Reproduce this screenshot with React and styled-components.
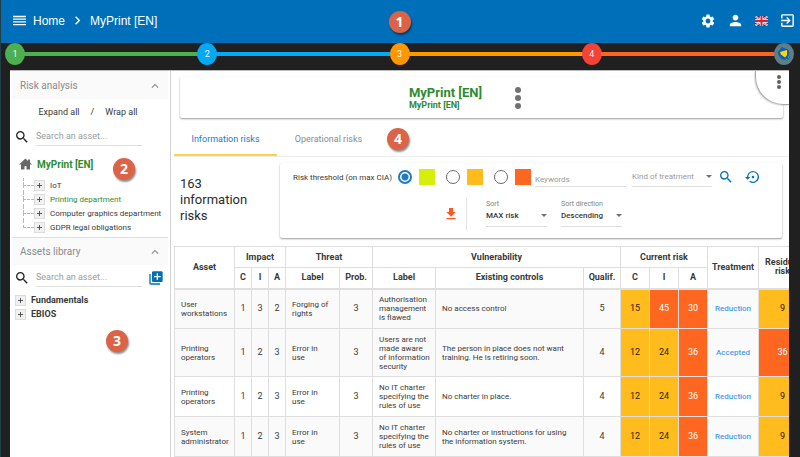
import React from "react";
import styled, { createGlobalStyle } from "styled-components";
import {
  MdChevronRight,
  MdSettings,
  MdPerson,
  MdExitToApp,
  MdSearch,
  MdLibraryAdd,
  MdSettingsBackupRestore,
  MdFileDownload,
  MdExpandLess,
} from "react-icons/md";

const c = {
  blue: "#006fb9",
  link: "#1e7ac4",
  green: "#2e8b30",
  text: "#3a3a3a",
  muted: "#8a8a8a",
  line: "#dedede",
  lime: "#d5ef0a",
  amber: "#ffbc1c",
  orange: "#ff661f",
};

const Global = createGlobalStyle`
  * { box-sizing: border-box; }
  body { margin: 0; background: #202020; font-family: Roboto, "Liberation Sans", sans-serif; font-size: 9px; color: ${c.text}; }
  button, input, select { font: inherit; color: inherit; }
  button { background: none; border: 0; padding: 0; margin: 0; cursor: pointer; }
  svg { display: block; flex: none; }
`;

const Page = styled.div`
  height: 100vh;
  display: flex;
  flex-direction: column;
  overflow: hidden;
  border-left: 1px solid #1f3f4a;
`;

const TopBar = styled.header`
  position: relative;
  height: 43px;
  flex: none;
  display: flex;
  align-items: center;
  justify-content: space-between;
  padding: 0 4px 2px 12px;
  background: ${c.blue};
  color: #fff;
`;

const Crumbs = styled.nav`
  display: flex;
  align-items: center;
  font-family: "Liberation Sans", Arial, sans-serif;
  font-size: 12px;
  gap: 4px;
  a { color: inherit; text-decoration: none; }
  button { margin-right: 3px; }
`;

const Actions = styled.div`
  display: flex;
  align-items: center;
  gap: 11px;
`;

const Badge = styled.span`
  position: absolute;
  left: ${(p) => p.$left};
  top: ${(p) => p.$top};
  width: 22px;
  height: 22px;
  border-radius: 50%;
  background: #da6445;
  color: #fff;
  font: bold 14px/22px "Open Sans", sans-serif;
  text-align: center;
  box-shadow: 1px 2px 2px rgba(0, 0, 0, 0.45);
  z-index: 2;
`;

const Stepper = styled.nav`
  height: 27px;
  flex: none;
  display: flex;
  align-items: flex-start;
  padding: 0 6px 0 4px;
`;

const Step = styled.button`
  width: 20px;
  height: 22px;
  flex: none;
  display: flex;
  align-items: center;
  justify-content: center;
  border-radius: 50%;
  background: ${(p) => p.$color};
  color: #f4f4f4;
  font-size: 9px;
`;

const Track = styled.span`
  flex: 1;
  height: 4px;
  margin: 9px -1px 0;
  background: ${(p) => p.$color};
`;

const Body = styled.div`
  flex: 1;
  min-height: 0;
  display: flex;
  margin: 0 11px 0 9px;
  background: #fff;
  border-top: 1px solid #bbb;
  overflow: hidden;
`;

const Sidebar = styled.aside`
  position: relative;
  width: 161px;
  flex: none;
  border-right: 1px solid #d2d2d2;
  padding: 0 2px;
`;

const SectionHead = styled.button`
  width: 100%;
  height: 28px;
  display: flex;
  align-items: center;
  justify-content: space-between;
  padding: 0 6px 0 8px;
  background: #fafafa;
  color: ${c.muted};
  font-size: 10px;
  border-top: 1px solid ${(p) => (p.$ruled ? c.line : "#fafafa")};
`;

const ToggleRow = styled.div`
  display: flex;
  justify-content: center;
  gap: 11px;
  line-height: 12px;
  padding: 7px 4px 8px 0;
  button { line-height: 12px; }
`;

const SearchRow = styled.div`
  display: flex;
  align-items: center;
  height: 22px;
  padding-left: 2px;
  gap: 6px;
`;

const SearchInput = styled.input`
  width: 106px;
  height: 18px;
  border: 0;
  border-bottom: 1px solid ${c.line};
  padding: 0 0 1px;
  font-size: 9px;
  outline: 0;
  background: none;
  &::placeholder { color: #9b9b9b; opacity: 1; }
`;

const IconButton = styled.button`
  display: flex;
  color: ${(p) => p.$color || "inherit"};
`;

const Root = styled.div`
  display: flex;
  align-items: center;
  gap: 5px;
  height: 14px;
  margin: 9px 0 7px 7px;
  color: ${c.green};
  font-weight: 700;
  font-size: 10px;
`;

const Tree = styled.ul`
  list-style: none;
  margin: 0 0 3px 11px;
  padding: 0;
`;

const Leaf = styled.li`
  display: flex;
  align-items: center;
  height: 14px;
  font-size: 8px;
  color: ${(p) => (p.$active ? c.green : c.text)};
  white-space: nowrap;
  &::before {
    content: "";
    width: 10px;
    height: 7px;
    flex: none;
    align-self: flex-start;
    border-left: 1px dashed #b9b9b9;
    border-bottom: 1px dashed #b9b9b9;
  }
  &:not(:last-child) {
    background: repeating-linear-gradient(#b9b9b9 0 2px, transparent 2px 4px) 0 0 / 1px 100% no-repeat;
  }
`;

const Expander = styled.button`
  width: 11px;
  height: 11px;
  flex: none;
  display: flex;
  align-items: center;
  justify-content: center;
  margin-right: 5px;
  border: 1px solid #dcdcdc;
  background: #f0f0f0;
  color: #555;
`;

const Library = styled.ul`
  list-style: none;
  margin: 4px 0 0 3px;
  padding: 0;
  font-weight: 700;
  li { display: flex; align-items: center; height: 14px; }
`;

const LibrarySearch = styled.div`
  padding-top: 2px;
`;

const Main = styled.main`
  position: relative;
  flex: 1;
  min-width: 0;
  padding-left: 3px;
`;

const TitleCard = styled.section`
  height: 41px;
  margin: 6px 6px 0;
  display: flex;
  align-items: center;
  justify-content: center;
  border-radius: 2px;
  box-shadow: 0 1px 2px rgba(0, 0, 0, 0.4);
  color: ${c.green};
`;

const Heading = styled.h1`
  margin: 0;
  font-size: 13px;
  line-height: 14px;
  font-weight: 700;
  small { display: block; font-size: 9px; line-height: 10px; }
`;

const CardMenu = styled.button`
  width: 72px;
  display: flex;
  justify-content: center;
  color: #707070;
`;

const CornerMenu = styled.button`
  position: absolute;
  top: 0;
  right: 0;
  width: 34px;
  height: 34px;
  display: flex;
  justify-content: flex-end;
  padding: 4px 7px;
  background: #fff;
  color: #606060;
  border: solid #aaa;
  border-width: 0 0 1px 1px;
  border-bottom-left-radius: 28px;
  box-shadow: -1px 1px 1px rgba(0, 0, 0, 0.12);
`;

const Tabs = styled.div`
  position: relative;
  display: flex;
  height: 39px;
  border-bottom: 1px solid #ececec;
`;

const Tab = styled.button`
  width: 103px;
  padding-top: 6px;
  font-size: 9px;
  color: ${(p) => (p.$active ? c.link : c.muted)};
  border-bottom: 2px solid ${(p) => (p.$active ? "#ffd04a" : "transparent")};
`;

const Toolbar = styled.div`
  display: flex;
  padding: 6px 7px 0 6px;
`;

const Count = styled.h2`
  width: 100px;
  flex: none;
  margin: 0;
  padding: 13px 24px 0 0;
  font-size: 13px;
  line-height: 16px;
  font-weight: 400;
  color: #2b2b2b;
`;

const Filters = styled.form`
  flex: 1;
  min-width: 0;
  height: 75px;
  padding: 5px 13px 0;
  border-radius: 2px;
  box-shadow: 0 1px 2px rgba(0, 0, 0, 0.4);
`;

const FilterRow = styled.div`
  display: flex;
  align-items: center;
  height: 18px;
  white-space: nowrap;
`;

const Thresholds = styled.fieldset`
  display: contents;
`;

const Caption = styled.span`
  width: 105px;
  flex: none;
  font-size: 8px;
`;

const Radio = styled.input`
  appearance: none;
  width: 14px;
  height: 14px;
  flex: none;
  margin: 0;
  border: 1px solid #6a6a6a;
  border-radius: 50%;
  &:checked {
    border: 2px solid ${c.link};
    background: radial-gradient(${c.link} 3px, transparent 4px);
  }
`;

const Swatch = styled.span`
  display: block;
  width: 16px;
  height: 16px;
  background: ${(p) => p.$color};
`;

const RiskOption = styled.label`
  display: flex;
  align-items: center;
  gap: 7px;
  margin-right: ${(p) => (p.$last ? "4px" : "11px")};
`;

const Keywords = styled.input`
  flex: 1;
  min-width: 40px;
  height: 19px;
  border: 0;
  border-bottom: 1px solid ${c.line};
  padding: 6px 0 0;
  font-size: 8px;
  outline: 0;
  &::placeholder { color: #999; opacity: 1; }
`;

const Field = styled.label`
  display: grid;
  width: ${(p) => p.$width};
  flex: none;
  font-size: 7px;
  line-height: 8px;
  color: #808080;
`;

const SelectBox = styled.span`
  display: flex;
  align-items: center;
  height: 19px;
  padding-bottom: ${(p) => (p.$empty ? "0" : "2px")};
  border-bottom: 1px solid ${c.line};
  select {
    appearance: none;
    flex: 1;
    min-width: 0;
    height: 16px;
    border: 0;
    padding: 0;
    background: none;
    outline: 0;
    font-size: 8px;
    font-weight: ${(p) => (p.$empty ? 400 : 500)};
    color: ${(p) => (p.$empty ? "#999" : c.text)};
  }
`;

const KindSlot = styled.div`
  margin-left: 6px;
`;

const FilterActions = styled.div`
  display: flex;
  gap: 11px;
  padding: 0 8px 0 6px;
`;

const SortRow = styled.div`
  display: flex;
  align-items: center;
  height: 32px;
  margin: 12px 0 0 150px;
`;

const Divider = styled.span`
  height: 32px;
  width: 1px;
  background: #e3e3e3;
  margin: 0 19px 0 7px;
`;

const SortFields = styled.div`
  display: flex;
  gap: 14px;
  padding-bottom: 2px;
`;

const TableClip = styled.div`
  margin-top: 8px;
  overflow: hidden;
`;

const RiskTable = styled.table`
  width: 100%;
  min-width: 633px;
  table-layout: fixed;
  border-collapse: collapse;
  font-size: 8px;
  line-height: 9px;
  th, td { border: 1px solid ${c.line}; padding: 0 3px 0 6px; }
  th { padding: 0; font-size: 9px; font-weight: 700; height: 21px; }
  thead tr:last-child { border-bottom: 2px solid ${c.line}; }
  thead tr:last-child th { height: 21px; }
  tbody tr { height: 40px; background: #fafafa; }
  tbody tr:nth-child(2) { height: 48px; }
  tbody tr:nth-child(3) { background: #fff; }
  tbody td:nth-child(5) { padding-right: 8px; }
  tbody td:nth-child(8) { padding-right: 12px; }
`;

const Num = styled.td`
  && { padding: 0; text-align: center; font-size: 9px; }
`;

const Risk = styled(Num)`
  background: ${(p) => (p.$value > 24 ? c.orange : c.amber)};
  color: ${(p) => (p.$value > 24 ? "#fff" : "#2e2300")};
`;

const Treatment = styled(Num)`
  a { color: #4a9cf0; text-decoration: none; font-size: 8px; font-weight: 500; }
`;

const Dots = ({ width, height, r }) => (
  <svg width={width} height={height} fill="currentColor" aria-hidden="true">
    <circle cx={width / 2} cy={r} r={r} />
    <circle cx={width / 2} cy={height / 2} r={r} />
    <circle cx={width / 2} cy={height - r} r={r} />
  </svg>
);

const MenuIcon = () => (
  <svg width="13" height="11" stroke="#fff" strokeWidth="1.3" aria-hidden="true">
    <path d="M0 1.5H13M0 4.2H13M0 6.9H13M0 9.6H13" />
  </svg>
);

const HomeIcon = () => (
  <svg width="13" height="12" viewBox="0 0 26 24" fill="#686868" aria-hidden="true">
    <path d="M13 1 0 13h4v10h7v-7h4v7h7V13h4l-4-4V3h-4v3z" />
  </svg>
);

const Flag = () => (
  <svg width="13" height="10" viewBox="0 0 26 20" aria-hidden="true">
    <path fill="#25306f" d="M0 0h26v20H0z" />
    <path stroke="#fff" strokeWidth="4" d="m0 0 26 20M26 0 0 20" />
    <path stroke="#d32239" strokeWidth="1.6" d="m0 0 26 20M26 0 0 20" />
    <path stroke="#fff" strokeWidth="7" d="M13 0v20M0 10h26" />
    <path stroke="#d32239" strokeWidth="4" d="M13 0v20M0 10h26" />
  </svg>
);

const Emblem = () => (
  <svg width="14" height="16" viewBox="0 0 28 32" aria-hidden="true">
    <path fill="#0b62ad" d="M1 12 6 7l3-5 5 2 8 3 3 6-1 6 3 6-4 4-7-1-7-2-5-6z" />
    <path fill="#ffd60a" d="m6 12 14-4v10l-4 5-8-6z" />
    <path fill="none" stroke="#5f9a6a" strokeWidth="2" d="m17 26 6 3 3-5M22 20l2 5" />
  </svg>
);

const Plus = () => (
  <svg width="5" height="5" stroke="currentColor" aria-hidden="true">
    <path d="M2.5 0v5M0 2.5h5" />
  </svg>
);

const Caret = () => (
  <svg width="6" height="4" fill="#707070" aria-hidden="true">
    <path d="M0 0h6L3 3z" />
  </svg>
);

const AssetSearch = ({ children }) => (
  <SearchRow>
    <IconButton type="button" aria-label="Search" $color="#222"><MdSearch size={16} /></IconButton>
    <SearchInput aria-label="Search an asset" placeholder="Search an asset..." />
    {children}
  </SearchRow>
);

const Select = ({ label, value, width, empty }) => (
  <Field $width={width}>
    {!empty && label}
    <SelectBox $empty={empty}>
      <select aria-label={label} defaultValue={value}><option>{value}</option></select>
      <Caret />
    </SelectBox>
  </Field>
);

const steps = [
  ["1", "#4caf50", "#4caf50"],
  ["2", "#03a9f4", "#03a9f4"],
  ["3", "#ff9800", "#ff9800"],
  ["4", "#f44336", "#ff6420"],
];

const tree = ["IoT", "Printing department", "Computer graphics department", "GDPR legal obligations"];

const columns = [60, 17, 17, 17, 54, 33, 63, null, 37, 29, 29, 29, 51, 48];

const risks = [
  ["User workstations", [1, 3, 2], "Forging of rights", 3, "Authorisation management is flawed", "No access control", 5, [15, 45, 30], "Reduction", 9],
  ["Printing operators", [1, 2, 3], "Error in use", 3, "Users are not made aware of information security", "The person in place does not want training. He is retiring soon.", 4, [12, 24, 36], "Accepted", 36],
  ["Printing operators", [1, 2, 3], "Error in use", 3, "No IT charter specifying the rules of use", "No charter in place.", 4, [12, 24, 36], "Reduction", 9],
  ["System administrator", [1, 2, 3], "Error in use", 3, "No IT charter specifying the rules of use", "No charter or instructions for using the information system.", 4, [12, 24, 36], "Reduction", 9],
];

export default function App() {
  return (
    <Page>
      <Global />
      <TopBar>
        <Crumbs>
          <button type="button" aria-label="Menu"><MenuIcon /></button>
          <a href="#home">Home</a>
          <MdChevronRight size={17} />
          <a href="#myprint">MyPrint [EN]</a>
        </Crumbs>
        <Actions>
          <IconButton type="button" aria-label="Settings"><MdSettings size={16} /></IconButton>
          <IconButton type="button" aria-label="Account"><MdPerson size={17} /></IconButton>
          <IconButton type="button" aria-label="Language"><Flag /></IconButton>
          <IconButton type="button" aria-label="Log out"><MdExitToApp size={17} /></IconButton>
        </Actions>
        <Badge $left="calc(50% - 12px)" $top="11px">1</Badge>
      </TopBar>
      <Stepper>
        {steps.map(([n, color, track]) => (
          <React.Fragment key={n}>
            <Step type="button" $color={color}>{n}</Step>
            <Track $color={track} />
          </React.Fragment>
        ))}
        <Step type="button" aria-label="Summary" $color="#607d8b"><Emblem /></Step>
      </Stepper>
      <Body>
        <Sidebar>
          <SectionHead type="button">Risk analysis<MdExpandLess size={14} /></SectionHead>
          <ToggleRow>
            <button type="button">Expand all</button>
            <span>/</span>
            <button type="button">Wrap all</button>
          </ToggleRow>
          <AssetSearch />
          <Root><HomeIcon />MyPrint [EN]</Root>
          <Tree>
            {tree.map((name, i) => (
              <Leaf key={name} $active={i === 1}>
                <Expander type="button" aria-label={`Expand ${name}`}><Plus /></Expander>
                {name}
              </Leaf>
            ))}
          </Tree>
          <SectionHead type="button" $ruled>Assets library<MdExpandLess size={14} /></SectionHead>
          <LibrarySearch>
            <AssetSearch>
              <IconButton type="button" aria-label="Add asset" $color={c.blue}><MdLibraryAdd size={16} /></IconButton>
            </AssetSearch>
          </LibrarySearch>
          <Library>
            {["Fundamentals", "EBIOS"].map((name) => (
              <li key={name}>
                <Expander type="button" aria-label={`Expand ${name}`}><Plus /></Expander>
                {name}
              </li>
            ))}
          </Library>
          <Badge $left="103px" $top="87px">2</Badge>
          <Badge $left="96px" $top="259px">3</Badge>
        </Sidebar>
        <Main>
          <TitleCard>
            <Heading>MyPrint [EN]<small>MyPrint [EN]</small></Heading>
            <CardMenu type="button" aria-label="Actions"><Dots width={6} height={22} r={3} /></CardMenu>
          </TitleCard>
          <CornerMenu type="button" aria-label="Options"><Dots width={6} height={14} r={2} /></CornerMenu>
          <Tabs role="tablist">
            <Tab type="button" role="tab" $active>Information risks</Tab>
            <Tab type="button" role="tab">Operational risks</Tab>
            <Badge $left="213px" $top="10px">4</Badge>
          </Tabs>
          <Toolbar>
            <Count>163 information risks</Count>
            <Filters>
              <FilterRow>
                <Thresholds>
                  <Caption>Risk threshold (on max CIA)</Caption>
                  {[c.lime, c.amber, c.orange].map((color, i) => (
                    <RiskOption key={color} $last={i === 2}>
                      <Radio type="radio" name="threshold" aria-label={`Threshold ${i + 1}`} defaultChecked={i === 0} />
                      <Swatch $color={color} />
                    </RiskOption>
                  ))}
                </Thresholds>
                <Keywords aria-label="Keywords" placeholder="Keywords" />
                <KindSlot>
                  <Select label="Kind of treatment" value="Kind of treatment" width="80px" empty />
                </KindSlot>
                <FilterActions>
                  <IconButton type="submit" aria-label="Search" $color={c.blue}><MdSearch size={16} /></IconButton>
                  <IconButton type="reset" aria-label="Reset" $color={c.blue}><MdSettingsBackupRestore size={16} /></IconButton>
                </FilterActions>
              </FilterRow>
              <SortRow>
                <IconButton type="button" aria-label="Export" $color="#ff5722"><MdFileDownload size={16} /></IconButton>
                <Divider />
                <SortFields>
                  <Select label="Sort" value="MAX risk" width="61px" />
                  <Select label="Sort direction" value="Descending" width="61px" />
                </SortFields>
              </SortRow>
            </Filters>
          </Toolbar>
          <TableClip>
            <RiskTable>
              <colgroup>
                {columns.map((w, i) => <col key={i} width={w || undefined} />)}
              </colgroup>
              <thead>
                <tr>
                  <th rowSpan={2}>Asset</th>
                  <th colSpan={3}>Impact</th>
                  <th colSpan={2}>Threat</th>
                  <th colSpan={3}>Vulnerability</th>
                  <th colSpan={3}>Current risk</th>
                  <th rowSpan={2}>Treatment</th>
                  <th rowSpan={2}>Residual<br />risk</th>
                </tr>
                <tr>
                  {["C", "I", "A", "Label", "Prob.", "Label", "Existing controls", "Qualif.", "C", "I", "A"].map((h, i) => (
                    <th key={i}>{h}</th>
                  ))}
                </tr>
              </thead>
              <tbody>
                {risks.map(([asset, impact, threat, prob, vuln, controls, qualif, current, treatment, residual], i) => (
                  <tr key={i}>
                    <td>{asset}</td>
                    {impact.map((v, j) => <Num key={j}>{v}</Num>)}
                    <td>{threat}</td>
                    <Num>{prob}</Num>
                    <td>{vuln}</td>
                    <td>{controls}</td>
                    <Num>{qualif}</Num>
                    {current.map((v, j) => <Risk key={j} $value={v}>{v}</Risk>)}
                    <Treatment><a href="#treatment">{treatment}</a></Treatment>
                    <Risk $value={residual}>{residual}</Risk>
                  </tr>
                ))}
              </tbody>
            </RiskTable>
          </TableClip>
        </Main>
      </Body>
    </Page>
  );
}
